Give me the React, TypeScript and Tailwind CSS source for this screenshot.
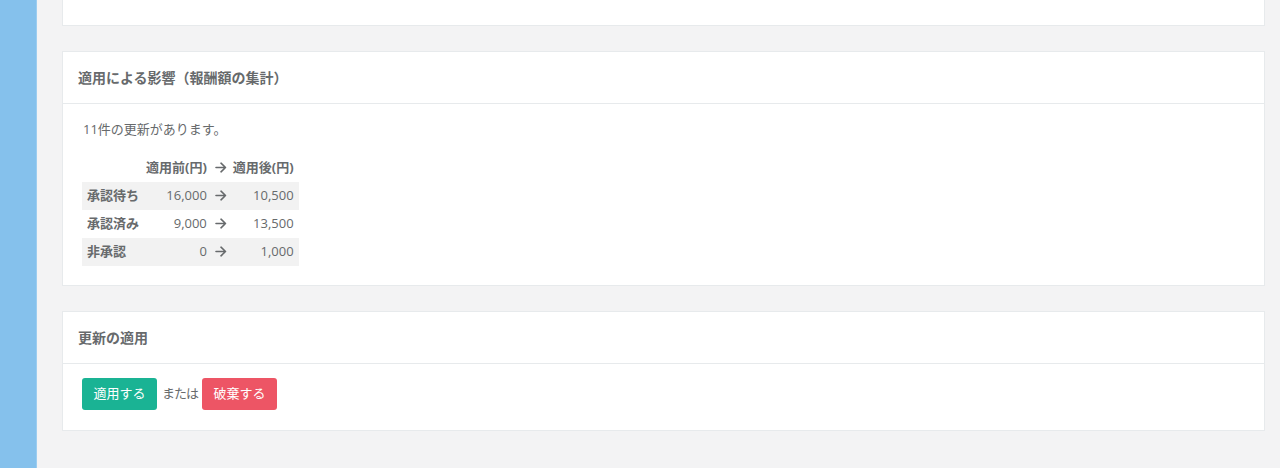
function Arrow() {
  return (
    <svg width="12" height="11" viewBox="0 0 12 11" className="inline-block align-[-1px]">
      <path d="M1 5.5h9.5M6 1.2l4.5 4.3L6 9.8" fill="none" stroke="currentColor" strokeWidth="1.6" strokeLinecap="round" strokeLinejoin="round" />
    </svg>
  );
}

export default function App() {
  const rows = [
    { label: "承認待ち", before: "16,000", after: "10,500" },
    { label: "承認済み", before: "9,000", after: "13,500" },
    { label: "非承認", before: "0", after: "1,000" },
  ];

  return (
    <div
      className="flex h-[468px] w-[1280px] overflow-hidden bg-[#f3f3f4] text-[13px] text-[#676a6c]"
      style={{ fontFamily: '"Open Sans", "Noto Sans CJK JP", sans-serif' }}
    >
      {/* sidebar */}
      <div className="w-[37px] shrink-0 border-r border-[#9ccdf0] bg-[#85c1ec]" />

      <div className="flex flex-1 flex-col gap-[25px] pl-[25px] pr-[15px]">
        {/* previous card (cut off) */}
        <div className="h-[26px] shrink-0 border border-t-0 border-[#e7eaec] bg-white" />

        {/* impact card */}
        <div className="border border-[#e7eaec] bg-white">
          <div className="flex h-[52px] items-center border-b border-[#e7eaec] px-[15px]">
            <h5 className="text-[14px] font-bold">適用による影響（報酬額の集計）</h5>
          </div>
          <div className="px-[20px] pt-[15px] pb-[19px]">
            <p className="leading-[20px]">11件の更新があります。</p>
            <table className="mt-[15px] -ml-px border-collapse">
              <thead>
                <tr className="h-[28px]">
                  <th className="w-[58px]" />
                  <th className="pl-[6px] pr-[5px] text-right font-bold">適用前(円)</th>
                  <th className="px-[3px] font-normal"><Arrow /></th>
                  <th className="pl-[3px] pr-[5px] text-right font-bold">適用後(円)</th>
                </tr>
              </thead>
              <tbody>
                {rows.map((r, i) => (
                  <tr key={r.label} className={`h-[28px] ${i % 2 === 0 ? "bg-[#f2f2f2]" : ""}`}>
                    <td className="pl-[5px] text-left font-bold">{r.label}</td>
                    <td className="pl-[6px] pr-[5px] text-right">{r.before}</td>
                    <td className="px-[3px]"><Arrow /></td>
                    <td className="pl-[3px] pr-[5px] text-right">{r.after}</td>
                  </tr>
                ))}
              </tbody>
            </table>
          </div>
        </div>

        {/* apply card */}
        <div className="border border-[#e7eaec] bg-white">
          <div className="flex h-[52px] items-center border-b border-[#e7eaec] px-[15px]">
            <h5 className="text-[14px] font-bold">更新の適用</h5>
          </div>
          <div className="flex items-center px-[19px] pt-[14px] pb-[20px]">
            <button className="h-[32px] w-[75px] rounded-[3px] bg-[#1ab394] text-[13px] text-white">
              適用する
            </button>
            <span className="ml-[5px] mr-[4px] tracking-[-1px]">または</span>
            <button className="h-[32px] w-[75px] rounded-[3px] bg-[#ed5565] text-[13px] text-white">
              破棄する
            </button>
          </div>
        </div>
      </div>
    </div>
  );
}
